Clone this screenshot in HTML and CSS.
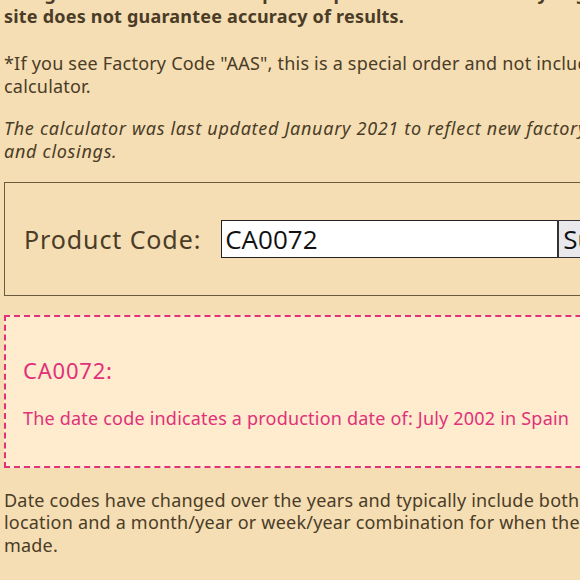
FILE: index.html
```html
<!DOCTYPE html>
<html lang="en">
<head>
  <meta charset="UTF-8" />
  <title>Date Code Calculator</title>
  <link rel="stylesheet" href="styles.css">
</head>
<body>
  <div class="page">
    <p class="note"><b>Using the date code is an imperfect process and it varies by bag, so this site does not guarantee accuracy of results.</b></p>

    <p>*If you see Factory Code "AAS", this is a special order and not included in this calculator.</p>

    <p class="updated"><i>The calculator was last updated January 2021 to reflect new factory openings and closings.</i></p>

    <form class="lookup">
      <label for="code">Product Code:</label>
      <input type="text" id="code" value="CA0072">
      <button type="button">Submit</button>
    </form>

    <div class="result">
      <h3>CA0072:</h3>
      <p>The date code indicates a production date of: July 2002 in Spain</p>
    </div>

    <p>Date codes have changed over the years and typically include both a factory location and a month/year or week/year combination for when the bag was made.</p>
  </div>
</body>
</html>
```

FILE: styles.css
```css
html, body {
  margin: 0;
  overflow: hidden;
}
body {
  background-color: #f5deb3;
  color: #4a3c27;
  font-family: 'Noto Sans', 'Open Sans', sans-serif;
  font-size: 18px;
  letter-spacing: 0.2px;
  line-height: 22.5px;
}
.page {
  width: 670px;
  padding: 0 4px;
  margin-top: -18px;
}
p {
  margin: 0 0 20px;
}
.note {
  margin-bottom: 25px;
}
.updated i {
  letter-spacing: 0.7px;
}
.lookup {
  display: flex;
  align-items: center;
  width: 760px;
  border: 1px solid #6b5a3e;
  padding: 37px 19px;
  margin-top: 20px;
}
.lookup label {
  font-size: 25px;
  letter-spacing: 0.9px;
  margin-right: 20px;
}
.lookup input {
  width: 337px;
  height: 38px;
  box-sizing: border-box;
  border: 1px solid #222;
  padding: 0 3px;
  font-family: 'Open Sans', sans-serif;
  font-size: 26px;
  letter-spacing: 0;
  color: #111;
  background: #fff;
}
.lookup button {
  height: 38px;
  border: 1px solid #333;
  border-left-width: 2px;
  margin-left: -1px;
  background: #e9e9ed;
  font-family: 'Open Sans', sans-serif;
  font-size: 26px;
  letter-spacing: 0;
  color: #111;
  padding: 0 4px;
}
.result {
  width: 760px;
  margin: 19px 0 21px;
  border: 2px dashed #e0317a;
  background: #ffebcd;
  color: #e0317a;
  padding: 38px 17px 36px;
}
.result h3 {
  margin: 0 0 22px;
  font-size: 22px;
  letter-spacing: 0.8px;
  line-height: 30px;
  font-weight: normal;
}
.result p {
  margin: 0;
}
```
